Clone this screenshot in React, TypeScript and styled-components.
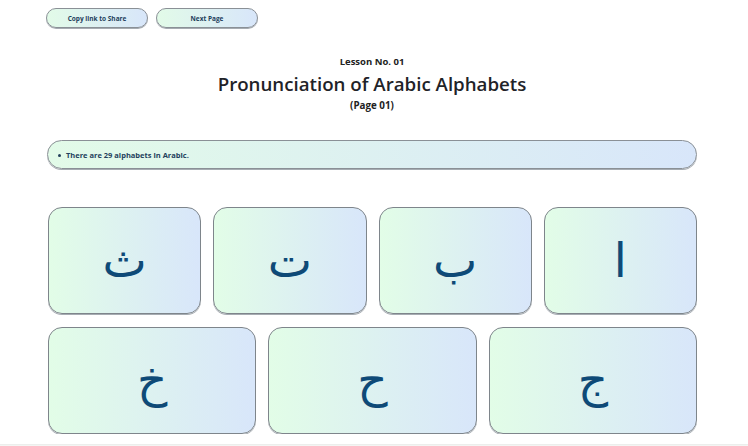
import React from "react";
import styled, { createGlobalStyle } from "styled-components";

const Global = createGlobalStyle`
  html, body { margin: 0; padding: 0; background: #ffffff; }
  body { font-family: "Open Sans", "Noto Sans", sans-serif; color: #222; }
`;

const Page = styled.div`
  width: 650px;
  padding: 8px 0 0 47px;
  display: flex;
  flex-direction: column;
`;

const Toolbar = styled.div`
  display: flex;
  gap: 8px;
  margin-left: -1px;
`;

const PillButton = styled.button`
  width: 102px;
  height: 20px;
  border-radius: 10px;
  border: 1px solid #8a9096;
  box-shadow: 0 1px 0 #a6acb2;
  background: linear-gradient(90deg, #e2fbe8 0%, #d8e6fa 100%);
  font-family: "Open Sans", sans-serif;
  font-weight: 700;
  font-size: 6.5px;
  color: #23405c;
  padding: 0;
  cursor: pointer;
`;

const Header = styled.header`
  display: flex;
  flex-direction: column;
  align-items: center;
  margin-top: 27px;
`;

const Lesson = styled.div`
  font-size: 9.5px;
  font-weight: 700;
  line-height: 13px;
`;

const Title = styled.h1`
  margin: 4px 0 0;
  font-size: 18.7px;
  font-weight: 600;
  line-height: 24px;
  color: #1f2328;
`;

const Sub = styled.div`
  margin-top: 4px;
  font-size: 9.8px;
  font-weight: 700;
  line-height: 12px;
`;

const InfoBar = styled.ul`
  margin: 28px 0 0;
  height: 29px;
  box-sizing: border-box;
  border: 1px solid #8a9096;
  box-shadow: 0 1px 0 #a6acb2;
  border-radius: 15px;
  background: linear-gradient(90deg, #e2fbe8 0%, #d8e6fa 100%);
  padding: 0 0 0 18px;
  display: flex;
  align-items: center;
  list-style: none;
`;

const InfoItem = styled.li`
  font-size: 7.5px;
  font-weight: 700;
  color: #23405c;
  position: relative;
  &::before {
    content: "";
    position: absolute;
    left: -8px;
    top: 4px;
    width: 3px;
    height: 3px;
    border-radius: 50%;
    background: #23405c;
  }
`;

const Grid = styled.div<{ $cols: number }>`
  display: grid;
  grid-template-columns: repeat(${(p) => p.$cols}, 1fr);
  column-gap: 12px;
  margin-top: ${(p) => (p.$cols === 4 ? "38px" : "13px")};
  padding-left: 1px;
`;

const Card = styled.div`
  height: 107px;
  box-sizing: border-box;
  border: 1px solid #7e858b;
  box-shadow: 0 1px 0 #a6acb2;
  border-radius: 14px;
  background: linear-gradient(90deg, #e2fde7 0%, #d8e6fa 100%);
  display: flex;
  align-items: center;
  justify-content: center;
`;

const Letter = styled.span`
  font-family: "DejaVu Sans", sans-serif;
  font-size: 47px;
  font-weight: 400;
  color: #0e4a77;
  line-height: 1;
`;

const Footer = styled.div`
  position: fixed;
  left: 0;
  right: 0;
  top: 444px;
  height: 4px;
  background: #f3f5f3;
  border-top: 1px solid #eceeec;
`;

const row1 = ["ث", "ت", "ب", "ا"];
const row2 = ["خ", "ح", "ج"];

export default function App() {
  return (
    <>
      <Global />
      <Page>
        <Toolbar>
          <PillButton>Copy link to Share</PillButton>
          <PillButton>Next Page</PillButton>
        </Toolbar>
        <Header>
          <Lesson>Lesson No. 01</Lesson>
          <Title>Pronunciation of Arabic Alphabets</Title>
          <Sub>(Page 01)</Sub>
        </Header>
        <InfoBar>
          <InfoItem>There are 29 alphabets in Arabic.</InfoItem>
        </InfoBar>
        <Grid $cols={4}>
          {row1.map((l) => (
            <Card key={l}>
              <Letter>{l}</Letter>
            </Card>
          ))}
        </Grid>
        <Grid $cols={3}>
          {row2.map((l) => (
            <Card key={l}>
              <Letter>{l}</Letter>
            </Card>
          ))}
        </Grid>
      </Page>
      <Footer />
    </>
  );
}
